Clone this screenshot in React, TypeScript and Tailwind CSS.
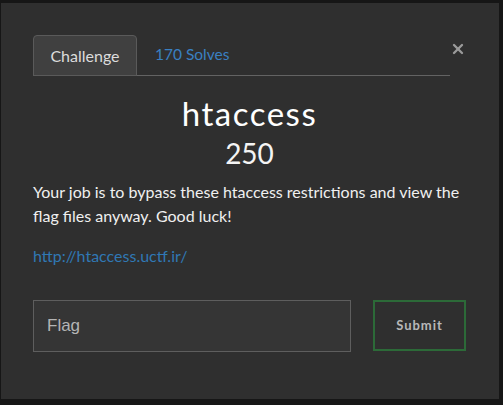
import { X } from "lucide-react";

export default function App() {
  return (
    <div className="w-[503px] h-[405px] bg-[#161616] overflow-hidden pt-[3px] pl-[1px] font-['Lato','Liberation_Sans',sans-serif]">
      <div className="w-[498px] h-[396px] bg-[#2f2f2f] pl-[32px] pt-[31px]">
        <div className="w-[433px]">
          {/* Tabs + close */}
          <div className="flex items-start">
            <div className="w-[420px] flex items-end border-b border-[#636363]">
              <div className="w-[104px] h-[41px] -mb-px flex items-center justify-center rounded-t-[4px] border border-[#5a5a5a] bg-[#404040] text-[16px] text-[#dcdcdc]">
                Challenge
              </div>
              <a className="h-[41px] flex items-center pl-[18px] text-[15.5px] text-[#3a80c2]" href="#">
                170 Solves
              </a>
            </div>
            <button className="ml-auto mt-[7px] text-[#9a9a9a]">
              <X size={16} strokeWidth={3.5} />
            </button>
          </div>

          {/* Title */}
          <h1 className="mt-[16px] text-center text-[33px] leading-[42px] tracking-[1.5px] text-white">htaccess</h1>
          <h2 className="mt-[2px] text-center text-[28px] leading-[34px] text-[#f4f4f4]">250</h2>

          <p className="mt-[10px] text-[16px] leading-[24px] text-[#f0f0f0]">
            Your job is to bypass these htaccess restrictions and view the flag files anyway. Good luck!
          </p>
          <a href="#" className="block mt-[16px] text-[16px] leading-[24px] text-[#3078b4]">
            http://htaccess.uctf.ir/
          </a>

          {/* Flag form */}
          <div className="mt-[32px] flex items-start">
            <div className="w-[318px] h-[52px] border border-[#5e5e5e] bg-[#353535] flex items-center pl-[13px] font-['Liberation_Sans',sans-serif] text-[17px] text-[#b4b4b4]">
              Flag
            </div>
            <button className="ml-auto w-[93px] h-[51px] border-2 border-[#2c6a38] text-[13px] font-bold tracking-[1px] text-[#b8b8b8]">
              Submit
            </button>
          </div>
        </div>
      </div>
    </div>
  );
}
